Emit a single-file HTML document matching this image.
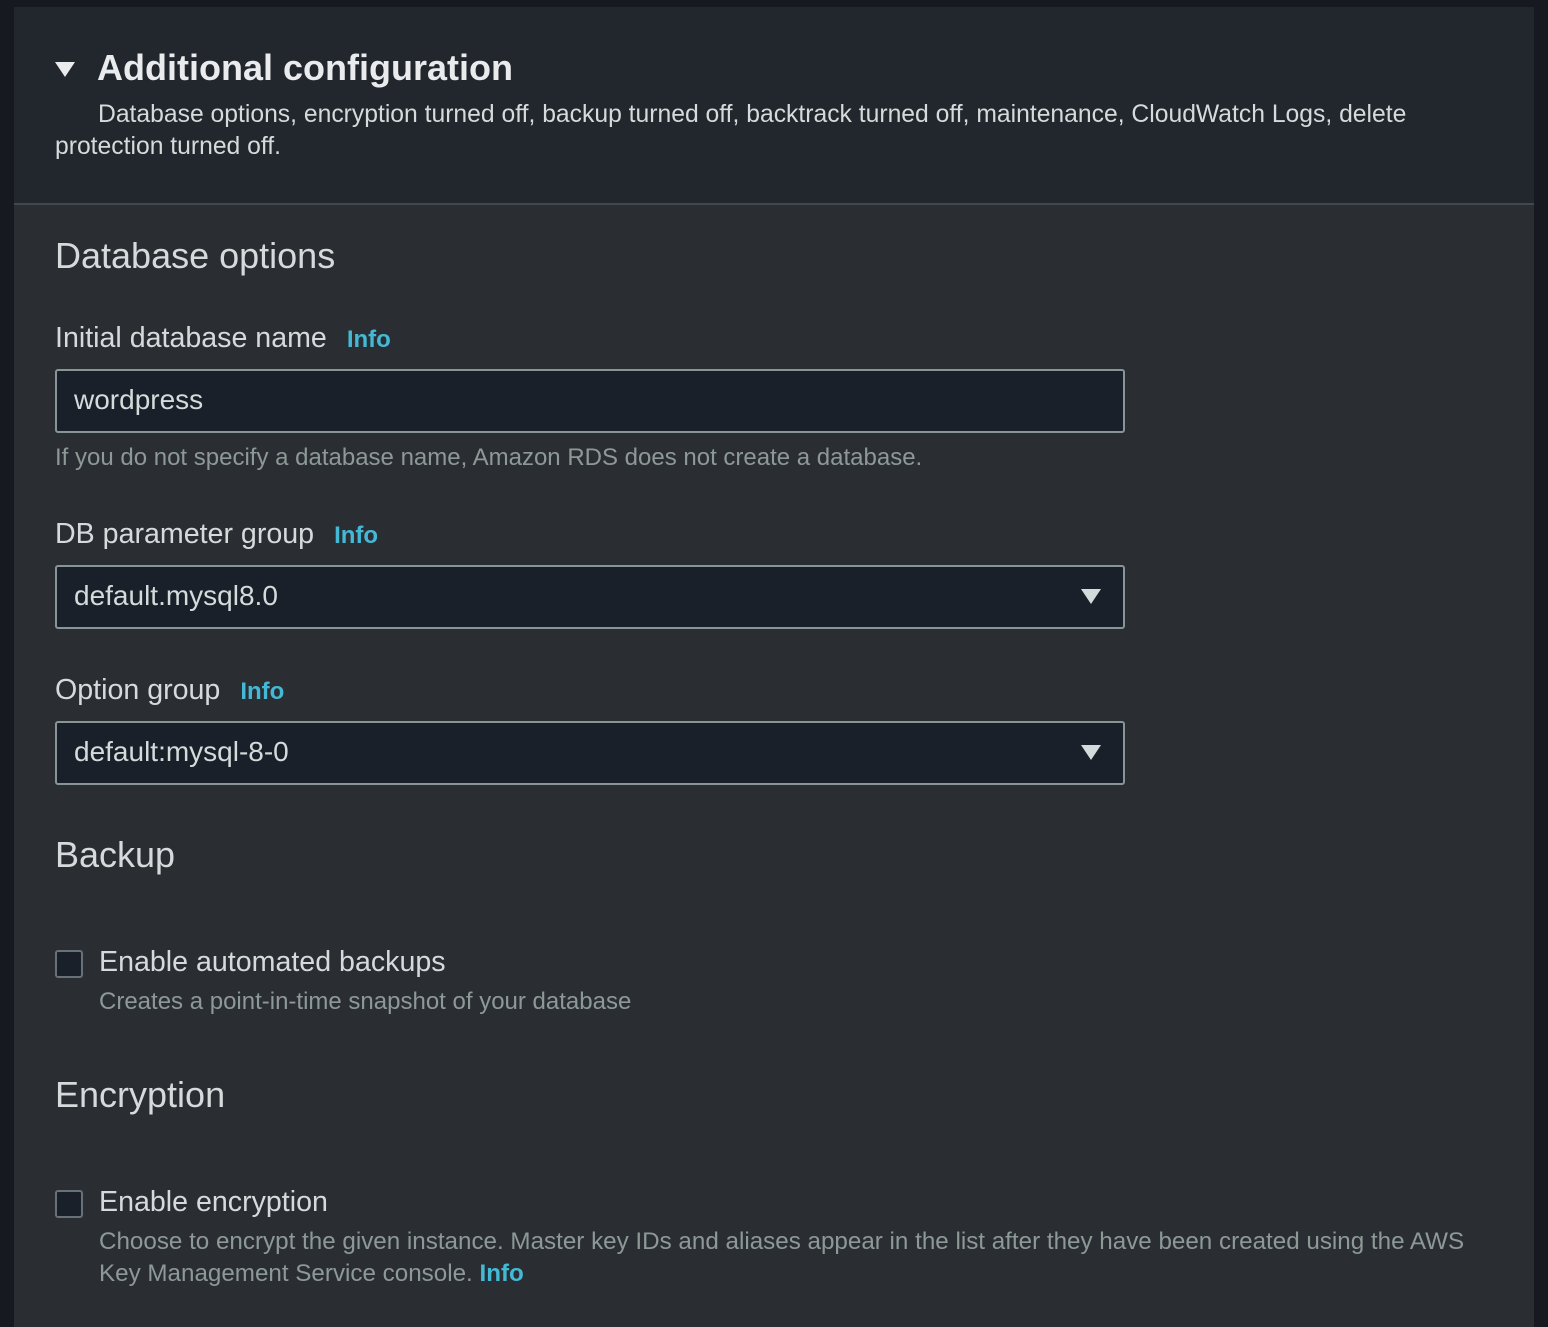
<!DOCTYPE html>
<html><head><style>
body{margin:0;width:1548px;height:1316px;background:#16191f;font-family:"Liberation Sans",sans-serif;color:#d5dbdb;position:relative;overflow:hidden}
.panel{position:absolute;left:14px;top:7px;width:1520px;height:1320px;background:#2a2e33}
.head{position:absolute;left:14px;top:7px;width:1520px;height:196px;background:#22262d;border-bottom:2px solid #414750}
.a{position:absolute;white-space:nowrap}
.lbl{font-size:28.6px;color:#d5dbdb}
.info{color:#44b9d6;font-weight:bold;font-size:24px;margin-left:20px}
.sec{font-size:36px;color:#d5dbdb}
.sub{font-size:24px;color:#8d9996}
.box{position:absolute;left:55px;width:1066px;height:60px;background:#1a2029;border:2px solid #879596;border-radius:3px;box-sizing:content-box}
.box span{position:absolute;left:17px;top:13px;font-size:28px;color:#d5dbdb}
.tri{position:absolute;right:22px;top:22px;width:0;height:0;border-left:10px solid transparent;border-right:10px solid transparent;border-top:15px solid #d5dbdb}
.cb{position:absolute;left:55px;width:24px;height:24px;border:2px solid #687078;border-radius:3px;background:#1a2029}
</style></head><body>
<div class="panel"></div>
<div class="head"></div>
<div class="a" style="left:55px;top:62px;width:0;height:0;border-left:10px solid transparent;border-right:10px solid transparent;border-top:15px solid #e9ebed"></div>
<div class="a" style="left:97px;top:47px;font-size:36px;font-weight:bold;color:#e9ebed">Additional configuration</div>
<div class="a" style="left:98px;top:101px;font-size:24.7px;color:#d5dbdb">Database options, encryption turned off, backup turned off, backtrack turned off, maintenance, CloudWatch Logs, delete</div>
<div class="a" style="left:55px;top:133px;font-size:24.7px;color:#d5dbdb">protection turned off.</div>

<div class="a sec" style="left:55px;top:235px">Database options</div>
<div class="a lbl" style="left:55px;top:322px">Initial database name<span class="info">Info</span></div>
<div class="box" style="top:369px"><span>wordpress</span></div>
<div class="a sub" style="left:55px;top:444px">If you do not specify a database name, Amazon RDS does not create a database.</div>
<div class="a lbl" style="left:55px;top:518px">DB parameter group<span class="info">Info</span></div>
<div class="box" style="top:565px"><span>default.mysql8.0</span><div class="tri"></div></div>
<div class="a lbl" style="left:55px;top:674px">Option group<span class="info">Info</span></div>
<div class="box" style="top:721px"><span>default:mysql-8-0</span><div class="tri"></div></div>

<div class="a sec" style="left:55px;top:834px">Backup</div>
<div class="cb" style="top:950px"></div>
<div class="a lbl" style="left:99px;top:946px">Enable automated backups</div>
<div class="a sub" style="left:99px;top:988px">Creates a point-in-time snapshot of your database</div>

<div class="a sec" style="left:55px;top:1074px">Encryption</div>
<div class="cb" style="top:1190px"></div>
<div class="a lbl" style="left:99px;top:1186px">Enable encryption</div>
<div class="a sub" style="left:99px;top:1228px;font-size:24.2px">Choose to encrypt the given instance. Master key IDs and aliases appear in the list after they have been created using the AWS</div>
<div class="a sub" style="left:99px;top:1260px;font-size:24.2px">Key Management Service console. <span style="color:#44b9d6;font-weight:bold">Info</span></div>
</body></html>
